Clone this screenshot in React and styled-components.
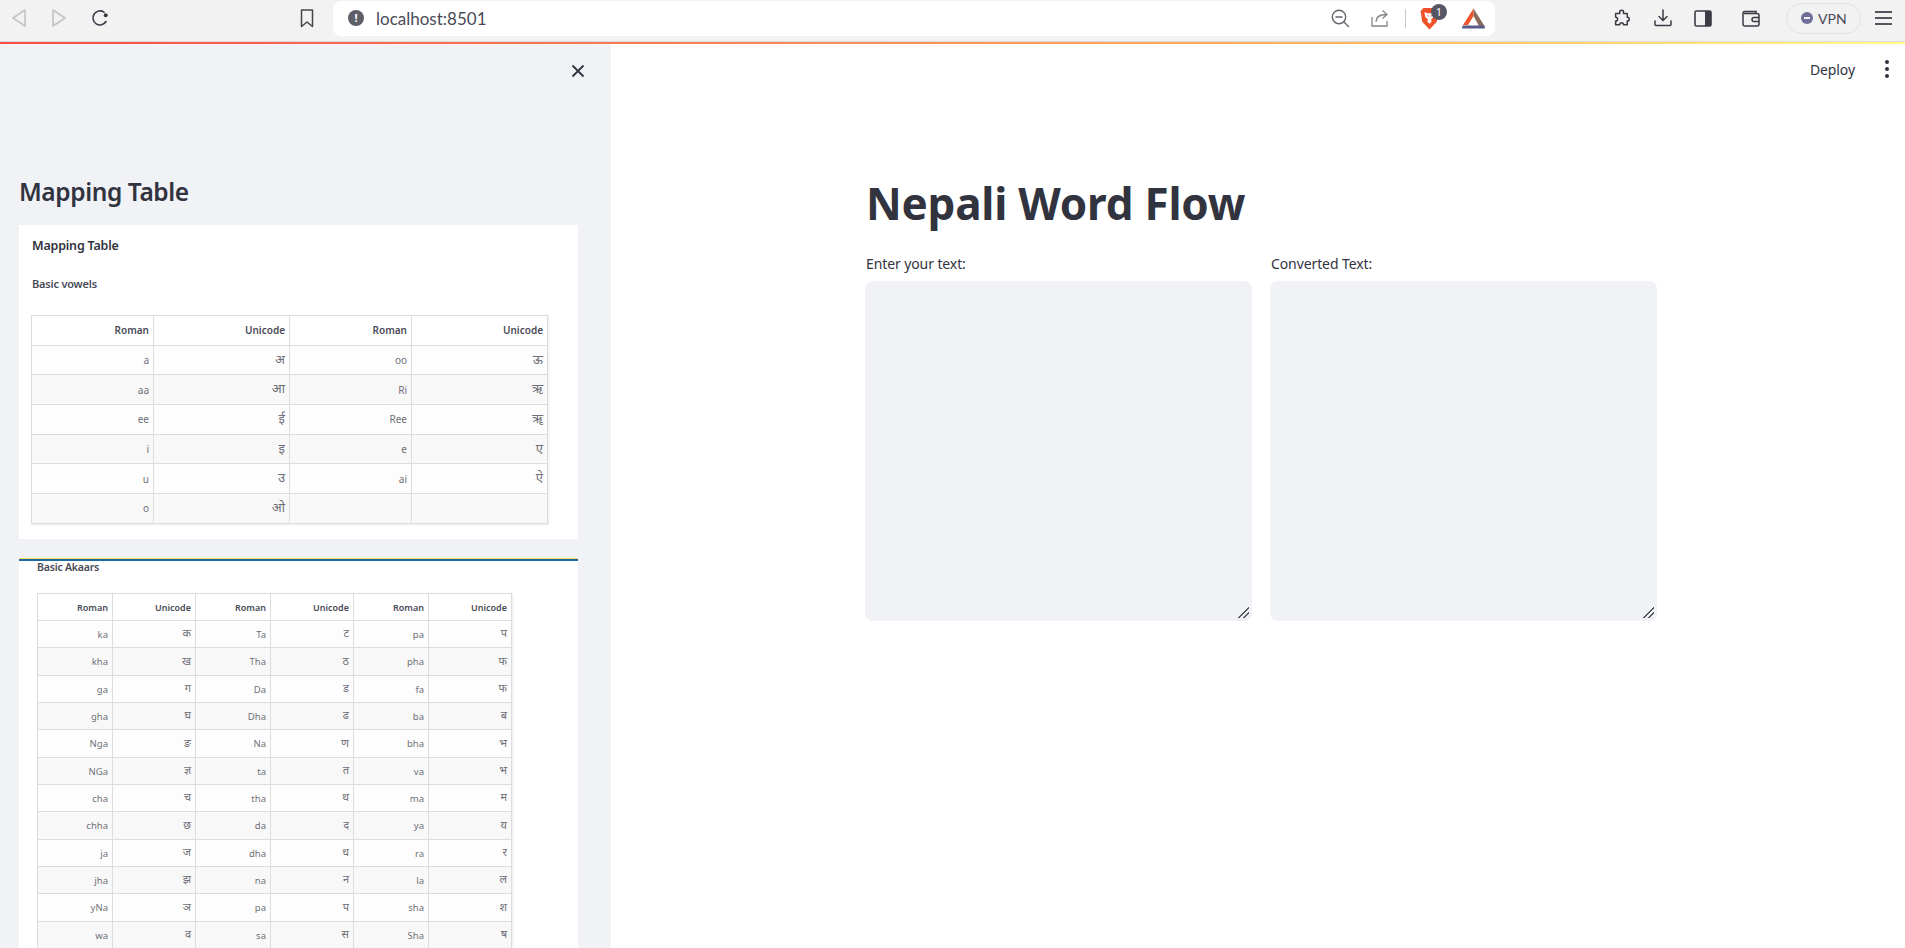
import styled, { createGlobalStyle } from 'styled-components'

const vowelRows = [
  ['a', 'अ', 'oo', 'ऊ'],
  ['aa', 'आ', 'Ri', 'ऋ'],
  ['ee', 'ई', 'Ree', 'ॠ'],
  ['i', 'इ', 'e', 'ए'],
  ['u', 'उ', 'ai', 'ऐ'],
  ['o', 'ओ', '', ''],
]

const akaarRows = [
  ['ka', 'क', 'Ta', 'ट', 'pa', 'प'],
  ['kha', 'ख', 'Tha', 'ठ', 'pha', 'फ'],
  ['ga', 'ग', 'Da', 'ड', 'fa', 'फ'],
  ['gha', 'घ', 'Dha', 'ढ', 'ba', 'ब'],
  ['Nga', 'ङ', 'Na', 'ण', 'bha', 'भ'],
  ['NGa', 'ज्ञ', 'ta', 'त', 'va', 'भ'],
  ['cha', 'च', 'tha', 'थ', 'ma', 'म'],
  ['chha', 'छ', 'da', 'द', 'ya', 'य'],
  ['ja', 'ज', 'dha', 'ध', 'ra', 'र'],
  ['jha', 'झ', 'na', 'न', 'la', 'ल'],
  ['yNa', 'ञ', 'pa', 'प', 'sha', 'श'],
  ['wa', 'व', 'sa', 'स', 'Sha', 'ष'],
]

const MappingGrid = ({ widths, headers, rows, small }) => (
  <Grid $small={small}>
    <colgroup>
      {widths.map((w, i) => <col key={i} width={w} />)}
    </colgroup>
    <thead>
      <tr>
        {headers.map((h, i) => <th key={i}>{h}</th>)}
      </tr>
    </thead>
    <tbody>
      {rows.map((row, r) => (
        <tr key={r}>
          {row.map((cell, c) => (
            <Cell key={c} $unicode={c % 2 === 1} $small={small}>{cell}</Cell>
          ))}
        </tr>
      ))}
    </tbody>
  </Grid>
)

const App = () => {
  return (
    <>
      <GlobalStyle />
      <Page>
        <BrowserBar>
          <Glyph $ml={11} width="16" height="20" viewBox="0 0 16 20">
            <path d="M14 2 L2 10 L14 18 Z" fill="none" stroke="#c6c6c8" strokeWidth="1.7" strokeLinejoin="round" />
          </Glyph>
          <Glyph $ml={24} width="16" height="20" viewBox="0 0 16 20">
            <path d="M2 2 L14 10 L2 18 Z" fill="none" stroke="#c6c6c8" strokeWidth="1.7" strokeLinejoin="round" />
          </Glyph>
          <Glyph $ml={24} width="18" height="18" viewBox="0 0 18 18">
            <path d="M15 12.5 A7 7 0 1 1 13 3.2" fill="none" stroke="#3b3b45" strokeWidth="1.6" strokeLinecap="round" />
            <circle cx="14.7" cy="6.3" r="2" fill="#3b3b45" />
          </Glyph>
          <Glyph $ml={191} width="14" height="19" viewBox="0 0 14 19">
            <path d="M1.5 1 H12.5 V17.5 L7 13 L1.5 17.5 Z" fill="none" stroke="#45454e" strokeWidth="1.5" strokeLinejoin="round" />
          </Glyph>
          <AddressBar>
            <InfoDot>!</InfoDot>
            <UrlText>localhost:8501</UrlText>
            <AddressTools>
              <Glyph $ml={0} width="19" height="19" viewBox="0 0 19 19">
                <circle cx="8" cy="8" r="6.7" fill="none" stroke="#65656d" strokeWidth="1.4" />
                <path d="M5 8 H11 M13 13 L17.5 17.5" stroke="#65656d" strokeWidth="1.4" strokeLinecap="round" />
              </Glyph>
              <Glyph $ml={21} width="19" height="18" viewBox="0 0 19 18">
                <path d="M1 8 V17 H16 V12" fill="none" stroke="#85858b" strokeWidth="1.3" />
                <path d="M5 13 C5 8 9 5.5 15 5.5 M11.5 1.5 L16 5.5 L11.5 9.5" fill="none" stroke="#85858b" strokeWidth="1.3" />
              </Glyph>
              <Separator />
              <BraveWrap>
                <svg width="19" height="23" viewBox="0 0 18 22">
                  <path d="M3 1 H15 L17.5 4 L16 14 L9 21.5 L2 14 L0.5 4 Z" fill="#f0532b" />
                  <path d="M4 5 L7 6 H11 L14 5 L13 9.5 L10.5 12 L11 14 L9 16 L7 14 L7.5 12 L5 9.5 Z" fill="#fff" />
                  <path d="M7 8.5 H8 M10 8.5 H11" stroke="#f0532b" strokeWidth="1.2" />
                </svg>
                <Badge>1</Badge>
              </BraveWrap>
              <Glyph $ml={23} width="23" height="21" viewBox="0 0 23 21">
                <path d="M11.5 0.5 L1 17 H6 L11.5 8 Z" fill="#f0532b" />
                <path d="M11.5 0.5 L22.5 18 H17 L11.5 8 Z" fill="#8a6a5a" />
                <path d="M0.5 17.5 H22.5 L23 20.5 H0 Z" fill="#5a5a8c" />
              </Glyph>
            </AddressTools>
          </AddressBar>
          <Glyph $ml={118} width="18" height="18" viewBox="0 0 24 24">
            <path d="M9 4 C9 1 14 1 14 4 V6 H19 V11 C22.5 11 22.5 16 19 16 V21 H14 C14 17.5 9 17.5 9 21 H3.5 V16 C7 16 7 11 3.5 11 V6 H9 Z" fill="none" stroke="#3b3b45" strokeWidth="2" strokeLinejoin="round" />
          </Glyph>
          <Glyph $ml={23} width="18" height="18" viewBox="0 0 18 18">
            <path d="M9 1 V11 M5 7.5 L9 11.5 L13 7.5 M1 12 V15.5 Q1 16.5 2 16.5 H16 Q17 16.5 17 15.5 V12" fill="none" stroke="#3b3b45" strokeWidth="1.5" strokeLinecap="round" />
          </Glyph>
          <Glyph $ml={22} width="18" height="17" viewBox="0 0 18 17">
            <rect x="1" y="1" width="16" height="15" rx="1.5" fill="none" stroke="#3b3b45" strokeWidth="1.6" />
            <rect x="11" y="1" width="6" height="15" fill="#3b3b45" />
          </Glyph>
          <Glyph $ml={30} width="18" height="17" viewBox="0 0 18 17">
            <path d="M14 3.5 V1.5 H3 Q1 1.5 1 3.5 V14 Q1 16 3 16 H15 Q17 16 17 14 V5.5 Q17 3.5 15 3.5 H2" fill="none" stroke="#3b3b45" strokeWidth="1.5" />
            <path d="M17 7.5 H12 Q10 7.5 10 9.5 Q10 11.5 12 11.5 H17" fill="none" stroke="#3b3b45" strokeWidth="1.5" />
          </Glyph>
          <VpnPill>
            <VpnDot />
            VPN
          </VpnPill>
          <Burger>
            <i /><i /><i />
          </Burger>
        </BrowserBar>
        <Decoration />
        <AppArea>
          <Sidebar>
            <CloseRow>
              <svg width="14" height="14" viewBox="0 0 14 14">
                <path d="M1.5 1.5 L12.5 12.5 M12.5 1.5 L1.5 12.5" stroke="#31333f" strokeWidth="1.8" />
              </svg>
            </CloseRow>
            <SideTitle>Mapping Table</SideTitle>
            <FirstCard>
              <CardTitle>Mapping Table</CardTitle>
              <SubTitle>Basic vowels</SubTitle>
              <MappingGrid
                widths={[122, 136, 122, 136]}
                headers={['Roman', 'Unicode', 'Roman', 'Unicode']}
                rows={vowelRows}
              />
            </FirstCard>
            <SecondCard>
              <SubTitleSmall>Basic Akaars</SubTitleSmall>
              <MappingGrid
                small
                widths={[75, 83, 75, 83, 75, 83]}
                headers={['Roman', 'Unicode', 'Roman', 'Unicode', 'Roman', 'Unicode']}
                rows={akaarRows}
              />
            </SecondCard>
          </Sidebar>
          <Main>
            <TopActions>
              <DeployText>Deploy</DeployText>
              <Kebab><i /><i /><i /></Kebab>
            </TopActions>
            <Content>
              <Title>Nepali Word Flow</Title>
              <Fields>
                <Field>
                  <FieldLabel>Enter your text:</FieldLabel>
                  <TextBox />
                </Field>
                <Field>
                  <FieldLabel>Converted Text:</FieldLabel>
                  <TextBox />
                </Field>
              </Fields>
            </Content>
          </Main>
        </AppArea>
      </Page>
    </>
  )
}

export default App;

const sans = `"Noto Sans", "Open Sans", sans-serif`

const GlobalStyle = createGlobalStyle`
  html, body {
    margin: 0;
    padding: 0;
    background: #fff;
    overflow: hidden;
  }
`

const Page = styled.div`
  width: 1905px;
  height: 948px;
  overflow: hidden;
  display: flex;
  flex-direction: column;
  font-family: ${sans};
  color: #31333f;
`

const BrowserBar = styled.div`
  height: 42px;
  flex: none;
  background: #f2f2f2;
  border-bottom: 1px solid #dcdcdc;
  box-sizing: border-box;
  display: flex;
  align-items: center;
  padding-bottom: 5px;
`

const Glyph = styled.svg`
  flex: none;
  margin-left: ${(p) => p.$ml}px;
`

const AddressBar = styled.div`
  width: 1162px;
  height: 35px;
  margin-left: 19px;
  flex: none;
  background: #fff;
  border-radius: 8px;
  display: flex;
  align-items: center;
  padding-left: 15px;
  box-sizing: border-box;
`

const InfoDot = styled.span`
  width: 16px;
  height: 16px;
  border-radius: 50%;
  background: #5f5f69;
  color: #fff;
  font-size: 11px;
  font-weight: 700;
  line-height: 16px;
  text-align: center;
`

const UrlText = styled.span`
  margin-left: 12px;
  font-family: "Lato", sans-serif;
  font-size: 17px;
  color: #4a4a55;
`

const AddressTools = styled.div`
  margin-left: auto;
  padding-right: 10px;
  display: flex;
  align-items: center;
`

const Separator = styled.span`
  width: 1px;
  height: 19px;
  background: #c8c8cc;
  margin: 0 14px 0 15px;
`

const BraveWrap = styled.span`
  position: relative;
  display: block;
  width: 19px;
  height: 23px;
`

const Badge = styled.span`
  position: absolute;
  left: 11px;
  top: -3px;
  width: 16px;
  height: 16px;
  border-radius: 50%;
  background: #565665;
  color: #fff;
  font-size: 11px;
  line-height: 16px;
  text-align: center;
`

const VpnPill = styled.div`
  width: 75px;
  height: 31px;
  margin-left: 26px;
  flex: none;
  box-sizing: border-box;
  border: 1px solid #e2e2e4;
  border-radius: 16px;
  display: flex;
  align-items: center;
  gap: 5px;
  padding-left: 14px;
  font-family: "Lato", sans-serif;
  font-size: 14px;
  color: #4a4a55;
`

const VpnDot = styled.span`
  width: 12px;
  height: 12px;
  border-radius: 50%;
  background: #6e6e96;
  position: relative;

  &::after {
    content: '';
    position: absolute;
    left: 3px;
    right: 3px;
    top: 5px;
    height: 2px;
    background: #f2f2f2;
  }
`

const Burger = styled.div`
  width: 17px;
  margin-left: 14px;
  display: flex;
  flex-direction: column;
  gap: 4px;

  i {
    display: block;
    height: 2px;
    background: #55555e;
  }
`

const Decoration = styled.div`
  height: 2px;
  flex: none;
  background: linear-gradient(to right, #ff4b4b, #ffb35c 70%, #fffd80);
`

const AppArea = styled.div`
  flex: 1;
  display: flex;
  min-height: 0;
`

const Sidebar = styled.aside`
  width: 611px;
  flex: none;
  background: #f0f2f6;
  padding: 0 33px 0 19px;
  box-sizing: border-box;
`

const CloseRow = styled.div`
  display: flex;
  justify-content: flex-end;
  height: 14px;
  padding: 20px 0 95px;
  margin-right: -7px;
`

const SideTitle = styled.h2`
  margin: 0 0 14px;
  font-size: 24.5px;
  line-height: 38px;
  font-weight: 600;
  letter-spacing: -0.4px;
`

const FirstCard = styled.section`
  background: #fff;
  height: 314px;
  box-sizing: border-box;
  padding: 11px 12px 0;
`

const SecondCard = styled.section`
  background: #fff;
  margin-top: 19px;
  height: 400px;
  box-sizing: border-box;
  padding: 0 18px;
  border-top: 3px solid #1f6aa5;
  position: relative;

  &::before {
    content: '';
    position: absolute;
    left: 0;
    right: 0;
    top: -3px;
    height: 1px;
    background: #f5d75e;
  }
`

const CardTitle = styled.h3`
  margin: 0 0 0 1px;
  font-size: 12.5px;
  line-height: 20px;
  font-weight: 600;
  letter-spacing: -0.2px;
`

const SubTitle = styled.h4`
  margin: 19px 0 22px 1px;
  font-size: 11px;
  line-height: 18px;
  font-weight: 600;
  letter-spacing: -0.2px;
  color: #4a4b57;
`

const SubTitleSmall = styled.h4`
  margin: 0 0 19px;
  font-size: 10.5px;
  line-height: 13px;
  font-weight: 600;
  letter-spacing: -0.2px;
  color: #4a4b57;
`

const Grid = styled.table`
  border-collapse: collapse;
  table-layout: fixed;
  width: ${(p) => (p.$small ? 474 : 516)}px;
  box-shadow: 1px 1px 2px rgba(0, 0, 0, 0.08);

  th, td {
    border: 1px solid #dddddd;
    text-align: right;
    padding: 0 4px 0 0;
    box-sizing: border-box;
    height: ${(p) => (p.$small ? 27 : 29.7)}px;
    overflow: hidden;
    white-space: nowrap;
  }

  /* rows in the reference come out at about 27.3px, so every third one is a pixel taller */
  tbody tr:nth-child(3n + 2) td {
    height: ${(p) => (p.$small ? 28 : 29.7)}px;
  }

  th {
    background: #fff;
    font-size: ${(p) => (p.$small ? 9 : 10)}px;
    font-weight: 600;
    color: #4a4b57;
  }

  tbody tr:nth-child(even) td {
    background: #f8f8f8;
  }

  tbody tr:nth-child(odd) td {
    background: #fdfdfd;
  }
`

const Cell = styled.td`
  font-size: ${(p) => (p.$unicode ? (p.$small ? 11 : 13) : p.$small ? 9.5 : 10)}px;
  color: #6f7078;
  font-family: ${(p) => (p.$unicode ? `"Noto Sans Devanagari", ${sans}` : sans)};
`

const Main = styled.main`
  flex: 1;
  min-width: 0;
  background: #fff;
`

const TopActions = styled.div`
  display: flex;
  justify-content: flex-end;
  align-items: center;
  height: 50px;
  padding-right: 16px;
`

const DeployText = styled.span`
  font-size: 14px;
  letter-spacing: -0.1px;
  color: #31333f;
`

const Kebab = styled.div`
  margin-left: 30px;
  display: flex;
  flex-direction: column;
  gap: 3px;

  i {
    display: block;
    width: 4px;
    height: 4px;
    border-radius: 50%;
    background: #31333f;
  }
`

const Content = styled.div`
  width: 792px;
  margin-left: 254px;
  padding-top: 79px;
`

const Title = styled.h1`
  margin: 0 0 0 1px;
  font-size: 44px;
  line-height: 60px;
  font-weight: 700;
  letter-spacing: -0.22px;
  color: #31333f;
`

const Fields = styled.div`
  display: grid;
  grid-template-columns: 387px 387px;
  gap: 18px;
  margin-top: 20px;
`

const Field = styled.div`
  display: flex;
  flex-direction: column;
`

const FieldLabel = styled.label`
  font-size: 14px;
  line-height: 22px;
  height: 22px;
  margin: 0 0 6px 1px;
  letter-spacing: -0.1px;
  color: #31333f;
`

const TextBox = styled.textarea`
  height: 340px;
  width: 100%;
  box-sizing: border-box;
  border: none;
  outline: none;
  background: #f0f2f6;
  border-radius: 8px;
  resize: both;

  &::-webkit-resizer {
    background: linear-gradient(135deg, transparent 0 46%, #55555e 46% 56%, transparent 56% 70%, #55555e 70% 80%, transparent 80%) no-repeat 1px 1px / 11px 11px;
  }
`
